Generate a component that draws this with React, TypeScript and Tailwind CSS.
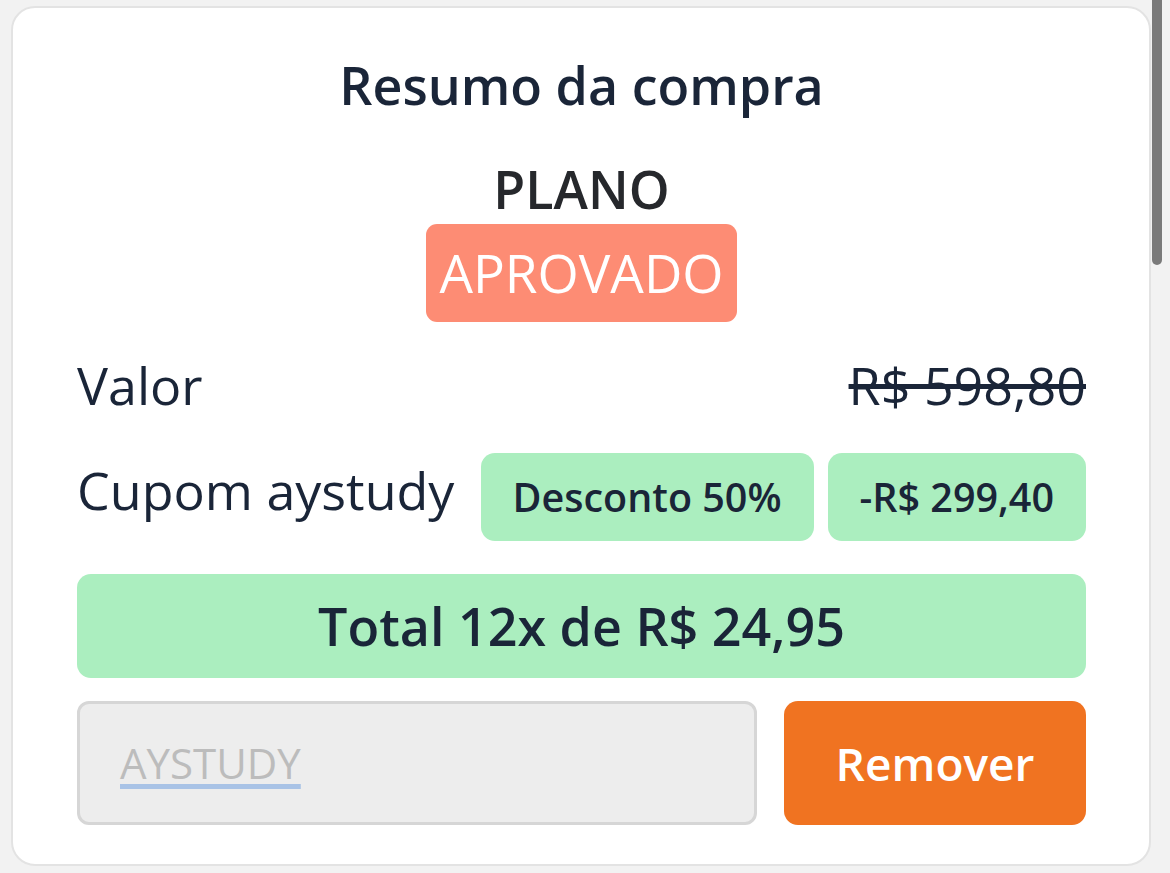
import React from "react";

export default function App() {
  const font = { fontFamily: '"Open Sans", "Noto Sans", sans-serif' };
  return (
    <div
      className="relative w-[1170px] h-[873px] overflow-hidden bg-[#f2f2f2]"
      style={font}
    >
      <div className="ml-[11px] mt-[6px] w-[1140px] h-[860px] bg-white border-2 border-[#e3e3e3] rounded-[24px] pl-[64px] pr-[63px] pt-[47px] flex flex-col">
        <h1 className="text-center text-[52px] leading-[60px] font-semibold text-[#1a2538]">
          Resumo da compra
        </h1>
        <div className="mt-[44px] text-center text-[52px] leading-[60px] font-semibold text-[#26282c]">
          PLANO
        </div>
        <div className="mt-[5px] self-center h-[98px] px-[13px] rounded-[11px] bg-[#fd8c74] text-white text-[53px] leading-[98px]">
          APROVADO
        </div>

        <div className="mt-[33px] h-[60px] flex items-center justify-between text-[52px] leading-[60px] text-[#1a2538]">
          <span>Valor</span>
          <span className="line-through">R$ 598,80</span>
        </div>

        <div className="mt-[38px] h-[88px] flex items-start justify-between">
          <span className="mt-[7px] text-[52px] leading-[60px] text-[#1a2538]">
            Cupom aystudy
          </span>
          <div className="flex gap-[14px]">
            <div className="h-[88px] px-[32px] rounded-[14px] bg-[#abeebf] text-[39.5px] leading-[88px] font-semibold text-[#1a2538]">
              Desconto 50%
            </div>
            <div className="h-[88px] px-[32px] rounded-[14px] bg-[#abeebf] text-[39.5px] leading-[88px] font-semibold text-[#1a2538]">
              -R$ 299,40
            </div>
          </div>
        </div>

        <div className="mt-[33px] h-[104px] rounded-[14px] bg-[#abeebf] text-center text-[52px] leading-[104px] font-semibold text-[#1a2538]">
          Total 12x de R$ 24,95
        </div>

        <div className="mt-[23px] h-[124px] flex gap-[27px]">
          <div className="w-[680px] h-[124px] rounded-[12px] border-[3px] border-[#d6d6d6] bg-[#ededed] pl-[40px] flex items-center">
            <span className="text-[42px] leading-[60px] text-[#bcbcbc] underline decoration-[#a9c3e6] decoration-[5px] underline-offset-[5px]">
              AYSTUDY
            </span>
          </div>
          <button className="flex-1 h-[124px] rounded-[14px] bg-[#f07321] text-white text-[46px] font-semibold">
            Remover
          </button>
        </div>
      </div>

      <div className="absolute left-[1152px] top-[-6px] w-[10px] h-[271px] rounded-full bg-[#7a7a7a]" />
    </div>
  );
}
